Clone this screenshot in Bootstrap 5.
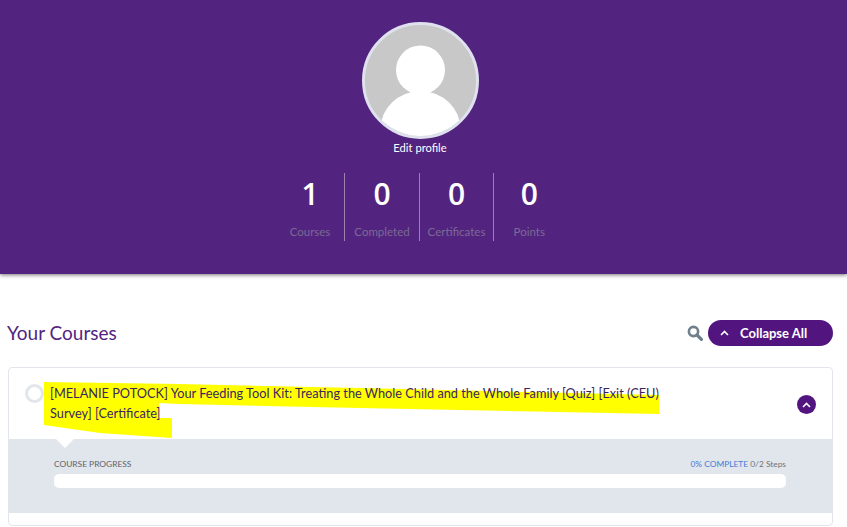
<!DOCTYPE html>
<html lang="en">
<head>
  <meta charset="UTF-8" />
  <meta name="viewport" content="width=device-width, initial-scale=1.0"/>
  <title>Your Courses</title>
  <link href="https://cdn.jsdelivr.net/npm/bootstrap@5.3.2/dist/css/bootstrap.min.css" rel="stylesheet"/>
  <style>
    html, body { height: 527px; overflow: hidden; }
    body { font-family: "Lato", "Liberation Sans", sans-serif; background: #fff; color: #4e4e4e; }
    .profile-band {
      background: #52247f;
      height: 274px;
      padding: 22px 7px 0 0;
      box-shadow: 0 1px 4px rgba(0,0,0,.55);
    }
    .avatar-ring {
      width: 117px; height: 117px;
      border: 3px solid #dfe1ee;
      border-radius: 50%;
      background: #c8c8c8;
      overflow: hidden;
    }
    .avatar-ring svg { display: block; width: 100%; height: 100%; }
    .edit-link { color: #fff; font-size: 11.2px; line-height: 16px; margin-top: 1px; text-decoration: none; }
    .stat-row { margin-top: 17px; }
    .stat-cell { width: 74.5px; height: 68px; text-align: center; border-right: 1px solid #9a83b3; }
    .stat-cell:first-child { width: 69.5px; }
    .stat-cell:last-child { width: 70px; border-right: 0; }
    .stat-num { color: #fff; font-size: 30px; font-weight: 600; line-height: 42px; font-family: "Open Sans", sans-serif; }
    .stat-label { color: #7b6a96; font-size: 11.5px; line-height: 16px; margin-top: 9px; white-space: nowrap; }
    .courses-head { padding: 46px 14px 0 7px; height: 93px; }
    .courses-title { color: #52247f; font-size: 19px; line-height: 26px; font-weight: 400; margin: 0; }
    .collapse-btn {
      background: #52157f; color: #fff; border: 0; border-radius: 13px;
      width: 125px; height: 26px; font-size: 13px; font-weight: 700; padding: 0 0 0 12px; line-height: 26px;
    }
    .collapse-btn:hover { background: #52157f; color: #fff; }
    .collapse-gap { gap: 11px; }
    .search-gap { gap: 5px; }
    .course-box { margin: 0 14px 0 8px; border: 1px solid #e2e6ec; border-radius: 4px; height: 159px; background: #fff; }
    .course-top { height: 71px; padding: 15px 0 0 41px; position: relative; }
    .course-name { position: relative; color: #3a2560; font-size: 12.75px; line-height: 20px; width: 622px; margin: 0; }
    .highlight-mark { position: absolute; left: -8px; top: -6px; width: 660px; height: 80px; }
    .status-ring { position: absolute; left: 16px; top: 16px; width: 19px; height: 19px; border: 3px solid #e2e6ec; border-radius: 50%; }
    .toggle-dot { position: absolute; right: 16px; top: 27px; width: 19px; height: 19px; border-radius: 50%; background: #52157f; }
    .progress-panel { background: #e1e5ec; height: 74px; padding: 19px 46px 0 45px; position: relative; }
    .progress-panel::before {
      content: ""; position: absolute; left: 47px; top: 0;
      border: 9px solid transparent; border-top-color: #fff; border-bottom: 0;
    }
    .progress-label { font-size: 8.4px; line-height: 12px; color: #5e6269; }
    .progress-pct { color: #3f7fd6; }
    .progress-steps { color: #70747b; }
    .progress-track { background: #fff; height: 14px; border-radius: 5px; margin-top: 4px; }
  </style>
</head>
<body>

<!-- Profile header -->
<section class="profile-band d-flex flex-column align-items-center">
  <div class="avatar-ring">
    <svg viewBox="0 0 111 111" aria-hidden="true">
      <circle cx="55.5" cy="45" r="24.5" fill="#fff"/>
      <ellipse cx="55.5" cy="104" rx="40" ry="38" fill="#fff"/>
    </svg>
  </div>
  <a class="edit-link" href="#">Edit profile</a>
  <div class="stat-row d-flex">
    <div class="stat-cell"><div class="stat-num">1</div><div class="stat-label">Courses</div></div>
    <div class="stat-cell"><div class="stat-num">0</div><div class="stat-label">Completed</div></div>
    <div class="stat-cell"><div class="stat-num">0</div><div class="stat-label">Certificates</div></div>
    <div class="stat-cell"><div class="stat-num">0</div><div class="stat-label">Points</div></div>
  </div>
</section>

<!-- Courses -->
<section>
  <div class="courses-head d-flex justify-content-between align-items-start">
    <h2 class="courses-title">Your Courses</h2>
    <div class="d-flex align-items-center search-gap">
      <svg width="16" height="16" viewBox="0 0 16 16" aria-hidden="true">
        <circle cx="6.5" cy="6.5" r="4.6" fill="none" stroke="#6f7f8c" stroke-width="2.6"/>
        <path d="M10 10l4.4 4.4" stroke="#6f7f8c" stroke-width="3.2" stroke-linecap="round"/>
      </svg>
      <button class="btn collapse-btn d-flex align-items-center collapse-gap" type="button">
        <svg width="9" height="6" viewBox="0 0 9 6" aria-hidden="true"><path d="M1 5l3.5-3.5L8 5" fill="none" stroke="#fff" stroke-width="1.6"/></svg>
        Collapse All
      </button>
    </div>
  </div>

  <div class="course-box">
    <div class="course-top">
      <span class="status-ring"></span>
      <p class="course-name">
        <svg class="highlight-mark" viewBox="0 0 660 80" aria-hidden="true">
          <polygon fill="#ffff00" points="2,5 138,7 318,11 617,18 617,37 318,31 138,27 117,26 117,41 130,41 130,61 58,56 2,48"/>
        </svg>
        <span class="position-relative">[MELANIE POTOCK] Your Feeding Tool Kit: Treating the Whole Child and the Whole Family [Quiz] [Exit (CEU) Survey] [Certificate]</span>
      </p>
      <span class="toggle-dot d-flex align-items-center justify-content-center">
        <svg width="9" height="6" viewBox="0 0 9 6" aria-hidden="true"><path d="M1 5l3.5-3.5L8 5" fill="none" stroke="#fff" stroke-width="1.6"/></svg>
      </span>
    </div>
    <div class="progress-panel">
      <div class="progress-label d-flex justify-content-between">
        <span>COURSE PROGRESS</span>
        <span><span class="progress-pct">0% COMPLETE</span> <span class="progress-steps">0/2 Steps</span></span>
      </div>
      <div class="progress-track"></div>
    </div>
  </div>
</section>

<script src="https://cdn.jsdelivr.net/npm/bootstrap@5.3.2/dist/js/bootstrap.bundle.min.js"></script>
</body>
</html>
